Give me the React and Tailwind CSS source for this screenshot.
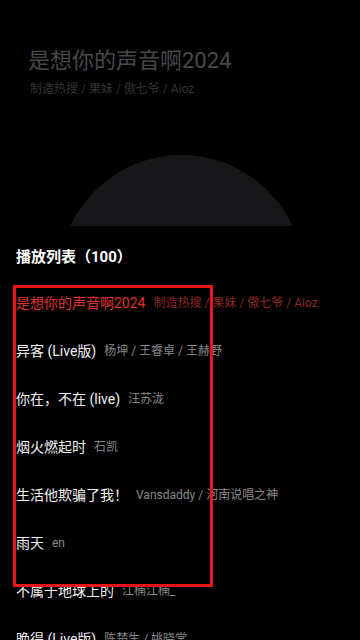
import React from 'react'

const songs = [
  { title: '是想你的声音啊2024', artist: '制造热搜 / 果妹 / 傲七爷 / Aioz', playing: true },
  { title: '异客 (Live版)', artist: '杨坤 / 王睿卓 / 王赫野' },
  { title: '你在，不在 (live)', artist: '汪苏泷' },
  { title: '烟火燃起时', artist: '石凯' },
  { title: '生活他欺骗了我！', artist: 'Vansdaddy / 河南说唱之神' },
  { title: '雨天', artist: 'en' },
  { title: '不属于地球上的', artist: '江楠江楠_' },
  { title: '晚得 (Live版)', artist: '陈楚生 / 姚晓棠' },
]

const font = { fontFamily: "Roboto, 'Noto Sans CJK SC', sans-serif" }

export default function App() {
  return (
    <div
      className="relative w-[360px] h-[640px] bg-black overflow-hidden font-[Roboto,'Noto_Sans_CJK_SC',sans-serif]"
      style={font}
    >
      {/* Now playing header */}
      <div className="pt-[46px] px-[28px]">
        <h1 className="text-[22px] leading-[30px] text-[#484848] whitespace-nowrap">
          是想你的声音啊2024
        </h1>
        <p className="mt-[4px] pl-[2px] text-[12px] leading-[18px] text-[#343434] whitespace-nowrap">
          制造热搜 / 果妹 / 傲七爷 / Aioz
        </p>
      </div>

      {/* Disc, cut by the playlist panel */}
      <div className="mt-[57px] h-[71px] overflow-hidden flex justify-center pl-[2px]">
        <div className="w-[245px] h-[245px] shrink-0 rounded-full bg-[#171619]" />
      </div>

      {/* Playlist */}
      <div className="pt-[20px] pl-[16px] bg-black">
        <h2 className="text-[15px] leading-[22px] font-bold text-white whitespace-nowrap">
          播放列表（100）
        </h2>
        <ul className="mt-[11px]">
          {songs.map((s) => (
            <li key={s.title} className="h-[48px] flex items-center whitespace-nowrap">
              <span
                className={`text-[14px] ${s.playing ? 'text-[#e0302b]' : 'text-[#f0f0f0]'}`}
              >
                {s.title}
              </span>
              <span
                className={`ml-[8px] text-[12px] ${s.playing ? 'text-[#8c2623]' : 'text-[#8a8a8a]'}`}
              >
                {s.artist}
              </span>
            </li>
          ))}
        </ul>
      </div>

      {/* Highlight frame */}
      <div className="absolute left-[13px] top-[285px] w-[200px] h-[302px] border-[3px] border-[#e8141a] pointer-events-none" />
    </div>
  )
}
